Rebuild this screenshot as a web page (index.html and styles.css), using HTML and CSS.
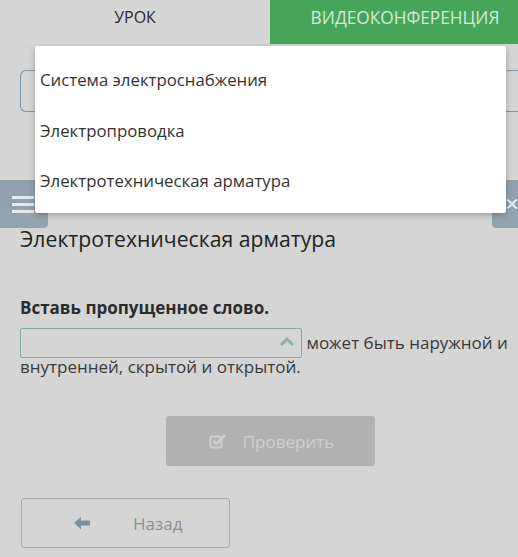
FILE: index.html
```html
<!DOCTYPE html>
<html lang="ru">
<head>
<meta charset="utf-8">
<link rel="stylesheet" href="styles.css">
</head>
<body>
<div class="tabs">
  <div class="tab tab-lesson">УРОК</div>
  <div class="tab tab-video">ВИДЕОКОНФЕРЕНЦИЯ</div>
</div>
<div class="page">
  <div class="search-row"><div class="search"></div></div>
  <div class="side-row">
    <div class="side-btn side-left">
      <svg width="22" height="18" viewBox="0 0 22 18"><rect x="0" y="1" width="22" height="3" fill="#e4eaee"/><rect x="0" y="8" width="22" height="3" fill="#e4eaee"/><rect x="0" y="15" width="22" height="3" fill="#e4eaee"/></svg>
    </div>
    <div class="side-btn side-right">
      <svg width="16" height="16" viewBox="0 0 16 16"><path d="M2 2L14 14M14 2L2 14" stroke="#e4eaee" stroke-width="3"/></svg>
    </div>
  </div>
  <h1 class="title">Электротехническая арматура</h1>
  <p class="task">Вставь пропущенное слово.</p>
  <div class="sentence">
    <span class="select"><svg class="chev" width="16" height="10" viewBox="0 0 16 10"><path d="M2 8L8 2L14 8" fill="none" stroke="#8fb0a6" stroke-width="3"/></svg></span> может быть наружной и внутренней, скрытой и открытой.
  </div>
  <div class="check-row">
    <div class="btn-check">
      <svg width="18" height="16" viewBox="0 0 18 16"><rect x="1.5" y="3.5" width="11" height="11" rx="1.5" fill="none" stroke="#d0d0d0" stroke-width="2"/><path d="M4.5 8L7.5 11L16 2" fill="none" stroke="#d0d0d0" stroke-width="2.6"/></svg>
      <span>Проверить</span>
    </div>
  </div>
  <div class="btn-back">
    <svg width="18" height="14" viewBox="0 0 18 14"><path d="M1 7L8 0.5V4.5H17V9.5H8V13.5Z" fill="#7f929e"/></svg>
    <span>Назад</span>
  </div>
</div>
<div class="dropdown">
  <div class="opt">Система электроснабжения</div>
  <div class="opt">Электропроводка</div>
  <div class="opt">Электротехническая арматура</div>
</div>
</body>
</html>
```
FILE: styles.css
```css
html, body {
  margin: 0;
  padding: 0;
}
body {
  background: #d5d5d5;
  font-family: "Open Sans", "Noto Sans", sans-serif;
  color: #2b2b2b;
  width: 518px;
  height: 557px;
  overflow: hidden;
  position: relative;
}
.tabs {
  display: flex;
  height: 44px;
}
.tab {
  display: flex;
  justify-content: center;
  padding-top: 6px;
  box-sizing: border-box;
  font-size: 16px;
}
.tab-lesson {
  width: 270px;
  background: #d6d6d6;
  color: #2a2a2a;
}
.tab-video {
  flex: 1;
  background: #45a65a;
  color: #d5ead8;
  font-size: 17.3px;
  padding-left: 22px;
}
.page {
  padding: 0 0 0 20px;
}
.search-row {
  padding-top: 26px;
}
.search {
  border: 1px solid #7d98ae;
  border-right: none;
  border-radius: 6px 0 0 6px;
  box-sizing: border-box;
  height: 42px;
}
.side-row {
  display: flex;
  justify-content: space-between;
  margin: 68px 0 0 -20px;
  height: 48px;
}
.side-btn {
  background: linear-gradient(#8fa1ad, #93a4ae);
  display: flex;
  align-items: center;
  border-radius: 0 0 4px 0;
}
.side-left {
  width: 48px;
  padding-left: 12px;
  box-sizing: border-box;
}
.side-right {
  width: 26px;
  border-radius: 0 0 0 4px;
  padding-left: 14px;
  box-sizing: border-box;
  overflow: hidden;
}
.title {
  margin: 0;
  font-weight: 400;
  font-size: 21.2px;
  line-height: 26px;
  color: #222;
  margin-top: -2px;
}
.task {
  margin: 45px 0 0;
  font-weight: 700;
  font-size: 17px;
  line-height: 22px;
  color: #2c2c2c;
}
.sentence {
  margin-top: 12px;
  font-size: 17px;
  line-height: 24px;
  color: #3a3a3a;
  padding-right: 8px;
}
.select {
  display: inline-block;
  width: 282px;
  height: 30px;
  margin: -3px 0;
  border: 1px solid #86a8a2;
  border-radius: 2px;
  box-sizing: border-box;
  vertical-align: top;
  position: relative;
}
.chev {
  position: absolute;
  right: 6px;
  top: 8px;
}
.check-row {
  padding-left: 146px;
  margin-top: 37px;
}
.btn-check {
  width: 209px;
  height: 50px;
  background: #b1b1b1;
  border-radius: 3px;
  display: flex;
  align-items: center;
  justify-content: center;
  gap: 16px;
  color: #cecece;
  font-size: 17px;
  box-sizing: border-box;
  padding-left: 2px;
}
.btn-back {
  margin-top: 32px;
  margin-left: 1px;
  width: 209px;
  height: 50px;
  border: 1px solid #a8a8a8;
  border-radius: 3px;
  box-sizing: border-box;
  display: flex;
  align-items: center;
  gap: 42px;
  padding-left: 51px;
  color: #8b9094;
  font-size: 17px;
}
.dropdown {
  position: absolute;
  left: 35px;
  top: 46px;
  width: 471px;
  height: 167px;
  background: #fff;
  box-shadow: 0 2px 6px rgba(0,0,0,0.25);
  box-sizing: border-box;
  padding: 9px 0 0 5px;
  border-radius: 2px;
}
.opt {
  font-size: 16.8px;
  line-height: 50.5px;
  height: 50.5px;
  color: #333;
}
```
